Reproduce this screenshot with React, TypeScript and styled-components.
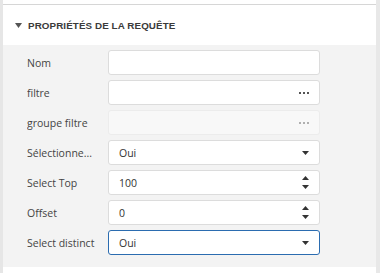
import React from "react";
import styled, { createGlobalStyle, css } from "styled-components";

const Global = createGlobalStyle`
  html, body { margin: 0; padding: 0; background: #fff; }
  body { font-family: "Open Sans", "Noto Sans", sans-serif; }
`;

const Frame = styled.div`
  width: 380px;
  height: 273px;
  display: flex;
  background: #fff;
  box-sizing: border-box;
`;

const LeftStrip = styled.div`
  width: 3px;
  background: #e6e6e6;
`;

const RightStrip = styled.div`
  width: 4px;
  background: #e8e8e8;
`;

const Panel = styled.div`
  flex: 1;
  display: flex;
  flex-direction: column;
  padding-top: 4px;
`;

const Header = styled.div`
  border-top: 1px solid #d6d6d6;
  height: 40px;
  display: flex;
  align-items: center;
  gap: 6px;
  padding-left: 12px;
  background: #fff;
  font-family: "Liberation Sans", Arial, sans-serif;
  font-weight: 700;
  font-size: 9.8px;
  color: #3a3a3a;
  letter-spacing: 0.1px;
`;

const Caret = styled.svg`
  display: block;
  margin-top: 1px;
`;

const Body = styled.div`
  background: #f3f3f3;
  padding: 5px 0 12px 24px;
  display: flex;
  flex-direction: column;
  gap: 5px;
`;

const Row = styled.div`
  display: flex;
  align-items: center;
  height: 25px;
`;

const Label = styled.div`
  flex: 0 0 72px;
  margin-right: 9px;
  font-size: 10.5px;
  color: #444;
  white-space: nowrap;
  overflow: hidden;
  text-overflow: ellipsis;
`;

const Field = styled.div<{ $disabled?: boolean; $focused?: boolean }>`
  flex: 0 0 212px;
  height: 25px;
  box-sizing: border-box;
  border: 1px solid #dcdcdc;
  border-radius: 3px;
  background: #fff;
  display: flex;
  align-items: center;
  padding: 0 10px 0 10px;
  font-size: 10.5px;
  color: #333;
  ${(p) =>
    p.$disabled &&
    css`
      background: #f8f8f8;
      border-color: #ececec;
    `}
  ${(p) =>
    p.$focused &&
    css`
      border-color: #2b6cb0;
    `}
`;

const Value = styled.span`
  flex: 1;
`;

const Dots = styled.span<{ $muted?: boolean }>`
  display: flex;
  gap: 2px;
  & > i {
    width: 2px;
    height: 2px;
    background: ${(p) => (p.$muted ? "#b0b0b0" : "#555")};
    display: block;
  }
`;

const Spin = styled.span`
  display: flex;
  flex-direction: column;
  gap: 5px;
`;

const Down = () => (
  <svg width="7" height="4" viewBox="0 0 7 4">
    <path d="M0 0 L7 0 L3.5 4 Z" fill="#333" />
  </svg>
);
const Up = () => (
  <svg width="7" height="4" viewBox="0 0 7 4">
    <path d="M0 4 L7 4 L3.5 0 Z" fill="#333" />
  </svg>
);

const Ellipsis = ({ muted }: { muted?: boolean }) => (
  <Dots $muted={muted}>
    <i />
    <i />
    <i />
  </Dots>
);

export default function App() {
  return (
    <>
      <Global />
      <Frame>
        <LeftStrip />
        <Panel>
          <Header>
            <Caret width="7" height="5" viewBox="0 0 7 5">
              <path d="M0 0 L7 0 L3.5 5 Z" fill="#555" />
            </Caret>
            PROPRIÉTÉS DE LA REQUÊTE
          </Header>
          <Body>
            <Row>
              <Label>Nom</Label>
              <Field />
            </Row>
            <Row>
              <Label>filtre</Label>
              <Field>
                <Value />
                <Ellipsis />
              </Field>
            </Row>
            <Row>
              <Label>groupe filtre</Label>
              <Field $disabled>
                <Value />
                <Ellipsis muted />
              </Field>
            </Row>
            <Row>
              <Label title="Sélectionner distinct">Sélectionne...</Label>
              <Field>
                <Value>Oui</Value>
                <Down />
              </Field>
            </Row>
            <Row>
              <Label>Select Top</Label>
              <Field>
                <Value>100</Value>
                <Spin>
                  <Up />
                  <Down />
                </Spin>
              </Field>
            </Row>
            <Row>
              <Label>Offset</Label>
              <Field>
                <Value>0</Value>
                <Spin>
                  <Up />
                  <Down />
                </Spin>
              </Field>
            </Row>
            <Row>
              <Label>Select distinct</Label>
              <Field $focused>
                <Value>Oui</Value>
                <Down />
              </Field>
            </Row>
          </Body>
        </Panel>
        <RightStrip />
      </Frame>
    </>
  );
}
